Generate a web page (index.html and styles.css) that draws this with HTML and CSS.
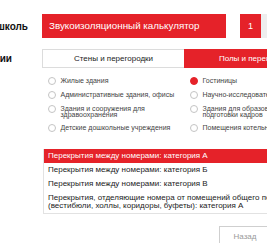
FILE: index.html
```html
<!DOCTYPE html>
<html lang="ru">
<head>
<meta charset="utf-8">
<title>Звукоизоляционный калькулятор</title>
<link rel="stylesheet" href="styles.css">
</head>
<body>
<div class="page">
  <div class="side side-head"><span class="lbl lbl-head">Акустическая школь</span></div>
  <div class="head">
    <div class="title">Звукоизоляционный калькулятор</div>
    <div class="steps"><span class="step active">1</span><span class="step">2</span></div>
  </div>

  <div class="side side-tabs"><span class="lbl lbl-tabs">Категории</span></div>
  <div class="main">
    <div class="tabs">
      <div class="tab">Стены и перегородки</div>
      <div class="tab active">Полы и перекрытия</div>
    </div>

    <div class="radios">
      <div class="col">
        <div class="opt"><span class="dot"></span><span class="txt">Жилые здания</span></div>
        <div class="opt"><span class="dot"></span><span class="txt">Административные здания, офисы</span></div>
        <div class="opt"><span class="dot"></span><span class="txt">Здания и сооружения для<br>здравоохранения</span></div>
        <div class="opt"><span class="dot"></span><span class="txt">Детские дошкольные учреждения</span></div>
      </div>
      <div class="col">
        <div class="opt"><span class="dot on"></span><span class="txt">Гостиницы</span></div>
        <div class="opt"><span class="dot"></span><span class="txt">Научно-исследовательские институты</span></div>
        <div class="opt"><span class="dot"></span><span class="txt">Здания для образования и<br>подготовки кадров</span></div>
        <div class="opt"><span class="dot"></span><span class="txt">Помещения котельных</span></div>
      </div>
    </div>

    <div class="list">
      <div class="item active">Перекрытия между номерами: категория А</div>
      <div class="item">Перекрытия между номерами: категория Б</div>
      <div class="item">Перекрытия между номерами: категория В</div>
      <div class="item">Перекрытия, отделяющие номера от помещений общего пользования<br>(вестибюли, холлы, коридоры, буфеты): категория А</div>
    </div>

    <div class="actions">
      <button class="btn">Назад</button>
      <button class="btn">Далее</button>
    </div>
  </div>
</div>
</body>
</html>
```

FILE: styles.css
```css
html, body {
  margin: 0;
  padding: 0;
  background: #ffffff;
  overflow: hidden;
}

body {
  width: 267px;
  height: 243px;
  font-family: "Liberation Sans", Arial, sans-serif;
  color: #222;
}

.page {
  display: grid;
  grid-template-columns: 42px 300px;
  grid-template-rows: 24px auto;
  row-gap: 11px;
  padding-top: 14px;
}

.side {
  overflow: hidden;
  display: flex;
  justify-content: flex-end;
  align-items: center;
  white-space: nowrap;
}

.side-tabs {
  align-items: flex-start;
  height: 19px;
}

.lbl {
  font-weight: bold;
  font-size: 10px;
  color: #111;
}

.lbl-head {
  margin-right: 14px;
}

.lbl-tabs {
  margin-right: 30px;
  line-height: 19px;
}

.head {
  display: flex;
  gap: 14px;
  height: 24px;
}

.title {
  width: 184px;
  background: #e52229;
  color: #fff;
  font-size: 9.8px;
  line-height: 24px;
  padding-left: 7px;
  box-sizing: border-box;
  white-space: nowrap;
}

.steps {
  display: flex;
}

.step {
  width: 21px;
  text-align: center;
  font-size: 9px;
  line-height: 24px;
  background: #eeeeee;
  color: #eeeeee;
}

.step.active {
  background: #e52229;
  color: #fff;
}

.main {
  display: flex;
  flex-direction: column;
}

.tabs {
  display: flex;
  width: 284px;
  height: 19px;
}

.tab {
  width: 142px;
  box-sizing: border-box;
  border: 1px solid #dcdcdc;
  border-right: none;
  font-size: 8px;
  line-height: 17px;
  text-align: center;
  color: #222;
  white-space: nowrap;
}

.tab.active {
  background: #e52229;
  border-color: #e52229;
  color: #fff;
}

.radios {
  display: grid;
  grid-template-columns: 142px 142px;
  padding-top: 10px;
  padding-left: 6px;
}

.col {
  display: flex;
  flex-direction: column;
  gap: 7px;
}

.opt {
  display: flex;
  align-items: flex-start;
  gap: 5px;
}

.dot {
  flex: none;
  width: 8px;
  height: 8px;
  box-sizing: border-box;
  border: 1px solid #c4c4c4;
  border-radius: 50%;
  margin-top: -1px;
  margin-left: -0.5px;
  background: #fff;
}

.dot.on {
  background: #e52229;
  border-color: #e52229;
}

.txt {
  font-size: 7px;
  line-height: 6px;
  color: #444;
  white-space: nowrap;
}

.list {
  margin-top: 17px;
  margin-left: 1px;
  width: 320px;
  border: 1px solid #e2e2e2;
  border-top: none;
  box-sizing: border-box;
}

.item {
  font-size: 8px;
  line-height: 8px;
  padding: 3px 4px;
  color: #222;
  white-space: nowrap;
}

.item.active {
  background: #e52229;
  color: #fff;
}

.actions {
  display: flex;
  gap: 6px;
  margin-top: 12px;
  padding-left: 177px;
}

.btn {
  width: 52px;
  height: 20px;
  border: 1px solid #cfcfcf;
  background: #fff;
  color: #9a9a9a;
  font-family: "Liberation Sans", Arial, sans-serif;
  font-size: 8px;
  padding: 0;
}
```
